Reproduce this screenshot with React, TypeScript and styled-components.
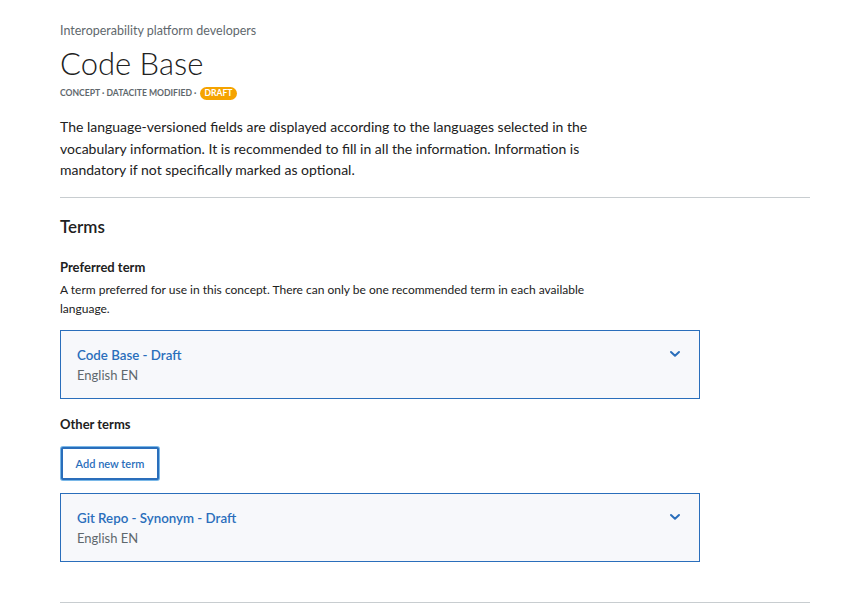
import React from 'react';
import styled, { createGlobalStyle } from 'styled-components';

const GlobalStyle = createGlobalStyle`
  body {
    margin: 0;
    background: #ffffff;
    font-family: "Source Sans Pro", Lato, "Liberation Sans", sans-serif;
    color: #212121;
  }
`;

const Page = styled.div`
  width: 750px;
  padding: 21px 0 0 60px;
`;

const Organization = styled.div`
  font-size: 12.5px;
  line-height: 20px;
  color: #5f686d;
`;

const Title = styled.h1`
  margin: 0;
  font-size: 31px;
  font-weight: 300;
  line-height: 44px;
  color: #212121;
`;

const Meta = styled.div`
  display: flex;
  align-items: center;
  gap: 4px;
  font-size: 8.6px;
  font-weight: 700;
  line-height: 16px;
  color: #5f686d;
  text-transform: uppercase;
`;

const Badge = styled.span`
  background: #f5a300;
  color: #ffffff;
  border-radius: 7px;
  padding: 0 4px;
  height: 13px;
  line-height: 13px;
  font-size: 8.6px;
  font-weight: 700;
`;

const Intro = styled.p`
  margin: 15px 0 0;
  max-width: 535px;
  font-size: 14px;
  line-height: 21.5px;
  color: #212121;
`;

const Divider = styled.hr<{ $gap: number }>`
  margin: ${p => p.$gap}px 0 0;
  border: none;
  border-top: 1px solid #c8cdd0;
`;

const SectionTitle = styled.h2`
  margin: 17px 0 0;
  font-size: 17px;
  font-weight: 600;
  line-height: 24px;
`;

const FieldLabel = styled.h3<{ $gap: number }>`
  margin: ${p => p.$gap}px 0 0;
  font-size: 13px;
  font-weight: 700;
  line-height: 20px;
`;

const FieldHint = styled.p`
  margin: 3px 0 0;
  max-width: 545px;
  font-size: 12px;
  line-height: 19px;
`;

const TermCard = styled.div<{ $gap: number }>`
  margin-top: ${p => p.$gap}px;
  width: 640px;
  box-sizing: border-box;
  display: flex;
  justify-content: space-between;
  align-items: flex-start;
  padding: 14px 16px 13px;
  border: 1px solid #2a6ebb;
  background: #f7f8fb;
`;

const TermName = styled.div`
  font-size: 13.3px;
  font-weight: 600;
  line-height: 20px;
  color: #2a6ebb;
`;

const TermLang = styled.div`
  font-size: 13px;
  line-height: 20px;
  color: #5f686d;
`;

const Chevron = styled.svg`
  margin: 5px 2px 0 0;
`;

const AddButton = styled.button`
  display: block;
  margin: 13px 0 0 1px;
  width: 98px;
  height: 33px;
  background: #ffffff;
  border: 2px solid #2a6ebb;
  box-shadow: 0 0 0 1px #7ab8e8;
  border-radius: 2px;
  font-family: inherit;
  font-size: 11px;
  font-weight: 600;
  color: #2a6ebb;
  cursor: pointer;
`;

const ChevronIcon = () => (
  <Chevron width="12" height="8" viewBox="0 0 12 8" fill="none">
    <path d="M2 2 L6 5.8 L10 2" stroke="#2a6ebb" strokeWidth="2" strokeLinecap="round" strokeLinejoin="round" />
  </Chevron>
);

const terms = [
  { name: 'Code Base - Draft', lang: 'English EN' },
  { name: 'Git Repo - Synonym - Draft', lang: 'English EN' },
];

const Term: React.FC<{ name: string; lang: string; gap: number }> = ({ name, lang, gap }) => (
  <TermCard $gap={gap}>
    <div>
      <TermName>{name}</TermName>
      <TermLang>{lang}</TermLang>
    </div>
    <ChevronIcon />
  </TermCard>
);

const App: React.FC = () => (
  <>
    <GlobalStyle />
    <Page>
      <Organization>Interoperability platform developers</Organization>
      <Title>Code Base</Title>
      <Meta>
        <span>Concept · Datacite modified ·</span>
        <Badge>Draft</Badge>
      </Meta>
      <Intro>
        The language-versioned fields are displayed according to the languages selected in the
        vocabulary information. It is recommended to fill in all the information. Information is
        mandatory if not specifically marked as optional.
      </Intro>
      <Divider $gap={16} />
      <SectionTitle>Terms</SectionTitle>
      <FieldLabel $gap={18}>Preferred term</FieldLabel>
      <FieldHint>
        A term preferred for use in this concept. There can only be one recommended term in each
        available language.
      </FieldHint>
      <Term name={terms[0].name} lang={terms[0].lang} gap={12} />
      <FieldLabel $gap={15}>Other terms</FieldLabel>
      <AddButton>Add new term</AddButton>
      <Term name={terms[1].name} lang={terms[1].lang} gap={13} />
      <Divider $gap={40} />
    </Page>
  </>
);

export default App;
